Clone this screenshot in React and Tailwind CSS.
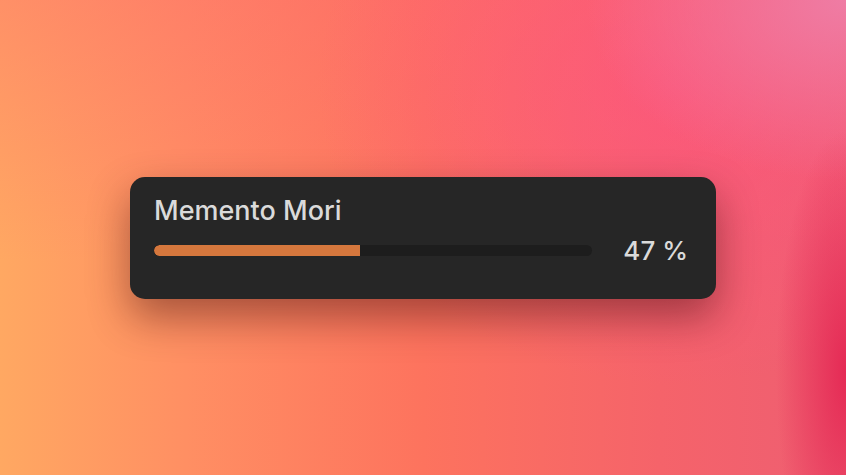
import React from "react";

function ProgressCard({ title, percent }) {
  return (
    <div className="w-[586px] h-[122px] rounded-[15px] bg-[#262626] shadow-[0_18px_42px_rgba(60,12,12,0.45)] pl-6 pr-7 pt-[18px]">
      <div className="text-[27px] leading-8 text-[#dadada] font-medium">{title}</div>
      <div className="mt-2 flex items-center h-8">
        <div className="w-[438px] h-[11px] rounded-full bg-[#1d1d1d] overflow-hidden">
          <div className="h-full w-[47%] bg-[#d5773d] rounded-l-full"></div>
        </div>
        <div className="flex-1 text-right text-[26px] leading-8 text-[#dadada] font-medium">{percent} %</div>
      </div>
    </div>
  );
}

export default function App() {
  return (
    <div className="w-[846px] h-[475px] flex items-center justify-center overflow-hidden font-['Inter',sans-serif] bg-[radial-gradient(ellipse_70px_240px_at_100%_78%,#e52a55,rgba(229,42,85,0)),radial-gradient(ellipse_260px_180px_at_100%_0%,#ef7ca4,rgba(239,124,164,0)),radial-gradient(ellipse_360px_300px_at_80%_18%,rgba(255,80,135,0.55),rgba(255,80,135,0)),linear-gradient(180deg,rgba(255,100,112,0.35)_0%,rgba(255,100,112,0)_55%),linear-gradient(90deg,#ffa862_0%,#ff8f63_22%,#fd735e_50%,#f5636a_78%,#ee5e72_100%)]">
      <ProgressCard title="Memento Mori" percent={47} />
    </div>
  );
}
